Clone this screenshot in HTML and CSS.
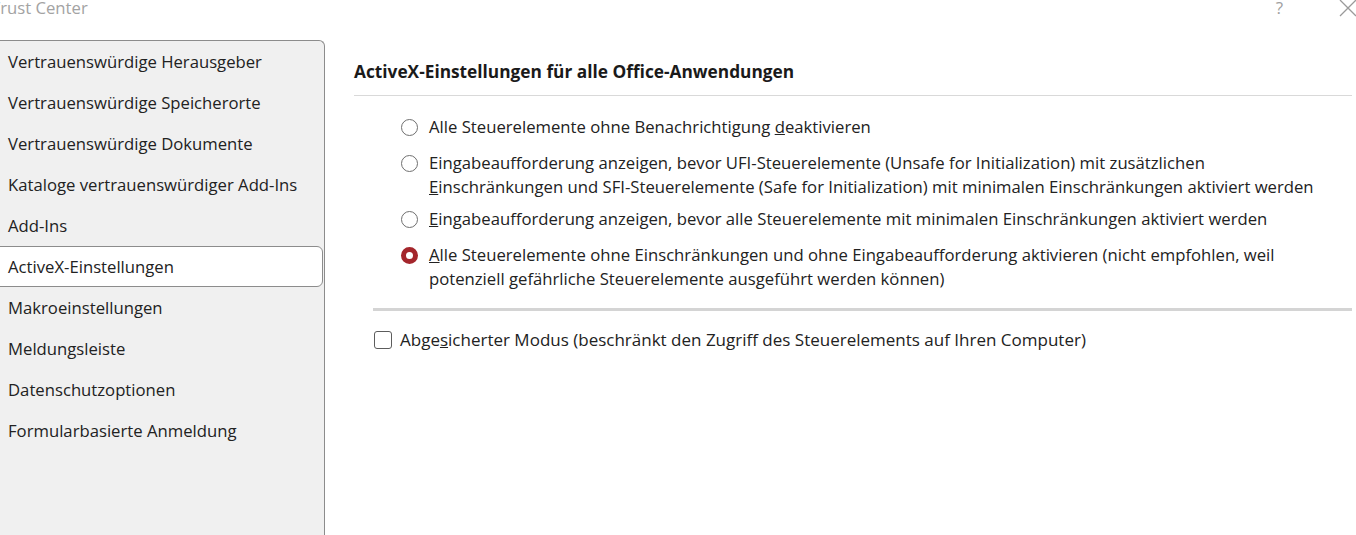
FILE: index.html
```html
<!DOCTYPE html>
<html lang="de">
<head>
<meta charset="utf-8">
<title>Trust Center</title>
<link rel="stylesheet" href="styles.css">
</head>
<body>
<div class="window">
  <header class="titlebar">
    <div class="title">Trust Center</div>
    <div class="title-actions">
      <span class="help">?</span>
      <svg class="close" width="18" height="18" viewBox="0 0 18 18"><path d="M1 1 L17 17 M17 1 L1 17" stroke="#9a9a9a" stroke-width="1.3" fill="none"/></svg>
    </div>
  </header>
  <div class="main">
    <nav class="sidebar">
      <div class="nav-item">Vertrauenswürdige Herausgeber</div>
      <div class="nav-item">Vertrauenswürdige Speicherorte</div>
      <div class="nav-item">Vertrauenswürdige Dokumente</div>
      <div class="nav-item">Kataloge vertrauenswürdiger Add-Ins</div>
      <div class="nav-item">Add-Ins</div>
      <div class="nav-item active">ActiveX-Einstellungen</div>
      <div class="nav-item">Makroeinstellungen</div>
      <div class="nav-item">Meldungsleiste</div>
      <div class="nav-item">Datenschutzoptionen</div>
      <div class="nav-item">Formularbasierte Anmeldung</div>
    </nav>
    <section class="content">
      <h2 class="heading">ActiveX-Einstellungen für alle Office-Anwendungen</h2>
      <div class="options">
        <div class="option">
          <span class="radio"></span>
          <span class="label">Alle Steuerelemente ohne Benachrichtigung <u>d</u>eaktivieren</span>
        </div>
        <div class="option">
          <span class="radio"></span>
          <span class="label">Eingabeaufforderung anzeigen, bevor UFI-Steuerelemente (Unsafe for Initialization) mit zusätzlichen<br><u>E</u>inschränkungen und SFI-Steuerelemente (Safe for Initialization) mit minimalen Einschränkungen aktiviert werden</span>
        </div>
        <div class="option tight">
          <span class="radio"></span>
          <span class="label"><u>E</u>ingabeaufforderung anzeigen, bevor alle Steuerelemente mit minimalen Einschränkungen aktiviert werden</span>
        </div>
        <div class="option">
          <span class="radio checked"></span>
          <span class="label"><u>A</u>lle Steuerelemente ohne Einschränkungen und ohne Eingabeaufforderung aktivieren (nicht empfohlen, weil<br>potenziell gefährliche Steuerelemente ausgeführt werden können)</span>
        </div>
      </div>
      <div class="divider"></div>
      <div class="check-row">
        <span class="checkbox"></span>
        <span class="label">Abge<u>s</u>icherter Modus (beschränkt den Zugriff des Steuerelements auf Ihren Computer)</span>
      </div>
    </section>
  </div>
</div>
</body>
</html>
```
FILE: styles.css
```css
html, body {
  margin: 0;
  padding: 0;
  background: #ffffff;
  overflow: hidden;
}
body {
  font-family: "Open Sans", "Noto Sans", "Liberation Sans", sans-serif;
  color: #1f1f1f;
  width: 1356px;
  height: 535px;
}
.window {
  display: flex;
  flex-direction: column;
  height: 535px;
}
.titlebar {
  height: 40px;
  display: flex;
  justify-content: space-between;
  align-items: flex-start;
}
.title {
  margin-left: -9px;
  margin-top: -3px;
  font-size: 16.7px;
  color: #a3a3a3;
  line-height: 22px;
}
.title-actions {
  display: flex;
  align-items: flex-start;
  gap: 56px;
  margin-right: -1px;
}
.help {
  font-size: 17px;
  color: #a0a0a0;
  line-height: 16px;
}
.close {
  margin-top: -1px;
}
.main {
  flex: 1;
  display: flex;
}
.sidebar {
  width: 333px;
  margin-left: -8px;
  background: #f0f0f0;
  border: 1px solid #8c8c8c;
  border-bottom: none;
  border-radius: 0 6px 0 0;
  box-sizing: border-box;
  display: flex;
  flex-direction: column;
}
.nav-item {
  height: 41px;
  line-height: 41px;
  padding-left: 15px;
  font-size: 16.7px;
  color: #222222;
  box-sizing: border-box;
  white-space: nowrap;
}
.nav-item.active {
  background: #ffffff;
  border: 1px solid #8c8c8c;
  border-radius: 6px;
  line-height: 39px;
  margin-right: 1px;
  padding-left: 14px;
}
.content {
  flex: 1;
  padding-left: 29px;
  padding-right: 4px;
}
.heading {
  margin: 0;
  font-size: 17.3px;
  font-weight: 700;
  line-height: 24px;
  padding-top: 20px;
  padding-bottom: 11px;
  border-bottom: 1px solid #d9d9d9;
  color: #1a1a1a;
}
.options {
  display: flex;
  flex-direction: column;
  gap: 12px;
  padding-left: 47px;
  padding-top: 19px;
}
.option {
  display: flex;
  align-items: flex-start;
  gap: 11px;
}
.option.tight {
  margin-top: -4px;
}
.label {
  font-size: 16.7px;
  line-height: 24px;
  color: #222222;
  white-space: nowrap;
}
.radio {
  width: 17px;
  height: 17px;
  box-sizing: border-box;
  border: 1.5px solid #6f6f6f;
  border-radius: 50%;
  margin-top: 4px;
  flex: none;
}
.radio.checked {
  border: 5px solid #a4262c;
}
.divider {
  margin-left: 19px;
  margin-top: 17px;
  height: 3px;
  background: #d4d4d4;
}
.check-row {
  display: flex;
  align-items: center;
  gap: 8px;
  margin-top: 17px;
  padding-left: 20px;
}
.check-row .label {
  font-size: 17px;
}
.checkbox {
  width: 18px;
  height: 18px;
  box-sizing: border-box;
  border: 1.5px solid #5c5c5c;
  border-radius: 3px;
  flex: none;
}
```
